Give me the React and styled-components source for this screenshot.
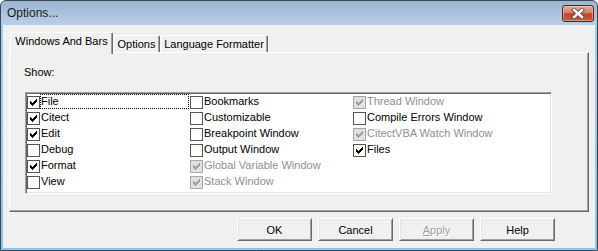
import React from 'react';
import styled, { createGlobalStyle } from 'styled-components';

const GlobalStyle = createGlobalStyle`
  html, body {
    margin: 0;
    padding: 0;
    background: #ffffff;
  }
  * {
    box-sizing: border-box;
  }
`

const Window = styled.div`
  width: 598px;
  height: 251px;
  display: flex;
  flex-direction: column;
  border: 1px solid #3b4856;
  border-radius: 6px 6px 0 0;
  background: linear-gradient(to bottom, #9cb4d0 0px, #b8cfe8 24px, #a4cbec 24px, #8fc3ea 100%);
  font-family: "Liberation Sans", Arial, sans-serif;
  font-size: 11px;
  color: #000;
  overflow: hidden;
`
const TitleBar = styled.div`
  height: 24px;
  display: flex;
  align-items: flex-start;
  justify-content: space-between;
  padding-left: 6px;
  padding-right: 3px;
`
const TitleText = styled.div`
  font-size: 12px;
  line-height: 24px;
  color: #1a1a1a;
`
const CloseButton = styled.div`
  width: 32px;
  height: 17px;
  margin-top: 4px;
  border: 1px solid #5a1f17;
  border-radius: 3px;
  background: linear-gradient(to bottom, #e6a99c 0%, #d77f6c 45%, #c2432e 52%, #c65a41 100%);
  box-shadow: inset 0 0 0 1px rgba(255, 220, 210, 0.45);
  display: flex;
  align-items: center;
  justify-content: center;
`
const Client = styled.div`
  flex: 1;
  margin: 0 2px 2px 2px;
  background: #f0f0f0;
  display: flex;
  flex-direction: column;
  padding: 7px 6px 7px 6px;
`
const TabStrip = styled.div`
  height: 20px;
  display: flex;
  align-items: flex-end;
  padding-left: 1px;
`
const Tab = styled.div`
  position: relative;
  z-index: ${p => (p.$active ? 1 : 0)};
  width: ${p => p.$w}px;
  height: ${p => (p.$active ? 22 : 17)}px;
  margin-bottom: ${p => (p.$active ? -2 : 0)}px;
  padding-top: 2px;
  background: #f0f0f0;
  border-top: 1px solid #ffffff;
  border-left: 1px solid #ffffff;
  border-right: 1px solid #696969;
  border-radius: 2px 2px 0 0;
  box-shadow: inset -1px 0 0 #a0a0a0;
  text-align: center;
  line-height: 13px;
  white-space: nowrap;
`
const Panel = styled.div`
  height: 160px;
  border-style: solid;
  border-width: 1px;
  border-color: #ffffff #696969 #696969 #ffffff;
  box-shadow: inset -1px -1px 0 #a0a0a0;
  padding: 13px 0 0 14px;
  display: flex;
  flex-direction: column;
`
const Caption = styled.div`
  line-height: 13px;
  margin-bottom: 13px;
`
const ListBox = styled.div`
  width: 527px;
  height: 102px;
  margin-left: 1px;
  background: #ffffff;
  border-style: solid;
  border-width: 1px;
  border-color: #a0a0a0 #ffffff #ffffff #a0a0a0;
  box-shadow: inset 1px 1px 0 #696969, inset -1px -1px 0 #e3e3e3;
  padding: 1px 0 0 1px;
  display: grid;
  grid-auto-flow: column;
  grid-template-rows: repeat(6, 16px);
  grid-auto-columns: 163px;
`
const Item = styled.div`
  display: flex;
  align-items: flex-start;
  height: 16px;
`
const Box = styled.div`
  width: 13px;
  height: 13px;
  margin-top: 2px;
  flex: none;
  border: 1px solid ${p => (p.$disabled ? '#a6a6a6' : '#555555')};
  background: ${p => (p.$disabled ? '#e1e1e1' : '#ffffff')};
  position: relative;
  svg {
    position: absolute;
    left: -1px;
    top: -1px;
  }
`
const Label = styled.div`
  width: 149px;
  height: 15px;
  padding-left: 1px;
  line-height: 15px;
  white-space: nowrap;
  color: ${p => (p.$disabled ? '#8f8f8f' : '#000000')};
  outline: ${p => (p.$focused ? '1px dotted #000' : 'none')};
  outline-offset: -1px;
`
const ButtonRow = styled.div`
  margin-top: 6px;
  display: flex;
  justify-content: flex-end;
  gap: 6px;
  padding-right: 34px;
`
const Button = styled.div`
  width: 75px;
  height: 23px;
  border-style: solid;
  border-width: 1px;
  border-color: #ffffff #696969 #696969 #ffffff;
  box-shadow: inset 1px 1px 0 #e3e3e3, inset -1px -1px 0 #a0a0a0;
  background: #f0f0f0;
  display: flex;
  align-items: center;
  justify-content: center;
  font-size: 11px;
  color: ${p => (p.$disabled ? '#a0a0a0' : '#000000')};
  text-shadow: ${p => (p.$disabled ? '1px 1px 0 #ffffff' : 'none')};
  u {
    text-decoration: underline;
  }
`

const CHECK =
  'M9 3h1v1h-1z M8 4h2v1h-2z M3 5h1v1h-1z M7 5h3v1h-3z M3 6h2v1h-2z M6 6h3v1h-3z M3 7h5v1h-5z M4 8h3v1h-3z M5 9h1v1h-1z';

const CheckMark = ({ color }) => (
  <svg width="13" height="13" viewBox="0 0 13 13" shapeRendering="crispEdges">
    <path d={CHECK} fill={color} />
  </svg>
);

const CloseGlyph = () => (
  <svg width="14" height="11" viewBox="0 0 14 11">
    <path d="M3 2 L11 9 M11 2 L3 9" stroke="#5b4a48" strokeWidth="4.2" strokeLinecap="square" />
    <path d="M3 2 L11 9 M11 2 L3 9" stroke="#ffffff" strokeWidth="2.4" strokeLinecap="square" />
  </svg>
);

const items = [
  { text: 'File', checked: true, focused: true },
  { text: 'Citect', checked: true },
  { text: 'Edit', checked: true },
  { text: 'Debug' },
  { text: 'Format', checked: true },
  { text: 'View' },
  { text: 'Bookmarks' },
  { text: 'Customizable' },
  { text: 'Breakpoint Window' },
  { text: 'Output Window' },
  { text: 'Global Variable Window', checked: true, disabled: true },
  { text: 'Stack Window', checked: true, disabled: true },
  { text: 'Thread Window', checked: true, disabled: true },
  { text: 'Compile Errors Window' },
  { text: 'CitectVBA Watch Window', checked: true, disabled: true },
  { text: 'Files', checked: true },
];

const tabs = [
  { text: 'Windows And Bars', w: 103, active: true },
  { text: 'Options', w: 47 },
  { text: 'Language Formatter', w: 108 },
];

export default function App() {
  return (
    <>
      <GlobalStyle />
      <Window>
        <TitleBar>
          <TitleText>Options...</TitleText>
          <CloseButton>
            <CloseGlyph />
          </CloseButton>
        </TitleBar>
        <Client>
          <TabStrip>
            {tabs.map(t => (
              <Tab key={t.text} $w={t.w} $active={t.active}>{t.text}</Tab>
            ))}
          </TabStrip>
          <Panel>
            <Caption>Show:</Caption>
            <ListBox>
              {items.map(it => (
                <Item key={it.text}>
                  <Box $disabled={it.disabled}>
                    {it.checked ? <CheckMark color={it.disabled ? '#a0a0a0' : '#000000'} /> : null}
                  </Box>
                  <Label $disabled={it.disabled} $focused={it.focused}>{it.text}</Label>
                </Item>
              ))}
            </ListBox>
          </Panel>
          <ButtonRow>
            <Button>OK</Button>
            <Button>Cancel</Button>
            <Button $disabled><span><u>A</u>pply</span></Button>
            <Button>Help</Button>
          </ButtonRow>
        </Client>
      </Window>
    </>
  );
}
